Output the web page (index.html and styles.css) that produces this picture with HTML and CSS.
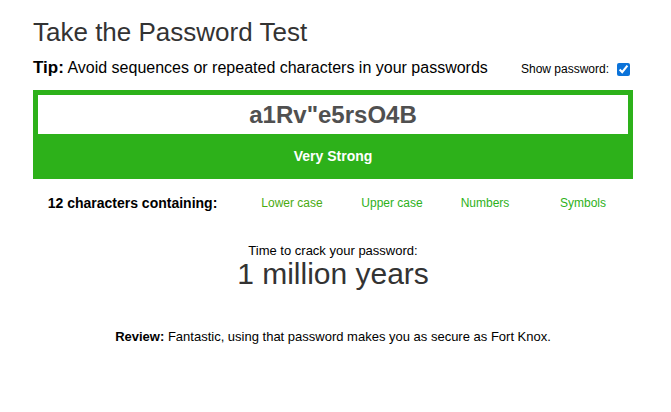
FILE: index.html
```
<!DOCTYPE html>
<html>
<head>
<meta charset="utf-8">
<link rel="stylesheet" href="styles.css">
</head>
<body>
<div class="page">
  <h1 class="title">Take the Password Test</h1>
  <div class="tip-row">
    <p class="tip"><b>Tip:</b> Avoid sequences or repeated characters in your passwords</p>
    <label class="show"><span>Show password:</span><input type="checkbox" checked></label>
  </div>
  <div class="meter">
    <div class="pw">a1Rv"e5rsO4B</div>
    <div class="status">Very Strong</div>
  </div>
  <div class="features">
    <div class="feat label">12 characters containing:</div>
    <div class="feat f1">Lower case</div>
    <div class="feat f2">Upper case</div>
    <div class="feat f3">Numbers</div>
    <div class="feat f4">Symbols</div>
  </div>
  <div class="crack">
    <div class="crack-label">Time to crack your password:</div>
    <div class="crack-time">1 million years</div>
  </div>
  <p class="review"><b>Review:</b> Fantastic, using that password makes you as secure as Fort Knox.</p>
</div>
</body>
</html>
```
FILE: styles.css
```
html, body { margin: 0; padding: 0; background: #fff; }
body { font-family: "Liberation Sans", Arial, sans-serif; color: #000; }
.page { width: 600px; margin-left: 33px; }
.title { font-size: 26px; line-height: 30px; font-weight: normal; color: #333; margin: 17px 0 0 0; }
.tip-row { display: flex; justify-content: space-between; align-items: baseline; margin-top: 11px; height: 20px; }
.tip { margin: 0; font-size: 16px; line-height: 20px; color: #000; }
.tip b { font-size: 17px; }
.show { font-size: 12px; display: flex; align-items: center; color: #000; }
.show input { width: 13px; height: 13px; margin: 0 3px 0 8px; accent-color: #0b73d9; }
.meter { margin-top: 12px; background: #2db11a; padding: 5px 5px 0 5px; }
.pw { background: #fff; height: 39px; line-height: 39px; text-align: center; font-size: 24px; font-weight: bold; color: #505050; }
.status { height: 45px; line-height: 45px; text-align: center; color: #fff; font-weight: bold; font-size: 14px; }
.features { display: flex; align-items: center; height: 48px; }
.feat { text-align: center; font-size: 12px; color: #2db11a; }
.label { width: 199px; font-size: 14px; font-weight: bold; color: #000; }
.f1 { width: 120px; color: #4aaa10; }
.f2 { width: 80px; }
.f3 { width: 106px; }
.f4 { width: 90px; }
.crack { text-align: center; margin-top: 16px; }
.crack-label { font-size: 13px; line-height: 15px; color: #000; }
.crack-time { font-size: 30px; line-height: 32px; color: #333; }
.review { text-align: center; font-size: 13px; margin: 39px 0 0 0; color: #000; }
```
